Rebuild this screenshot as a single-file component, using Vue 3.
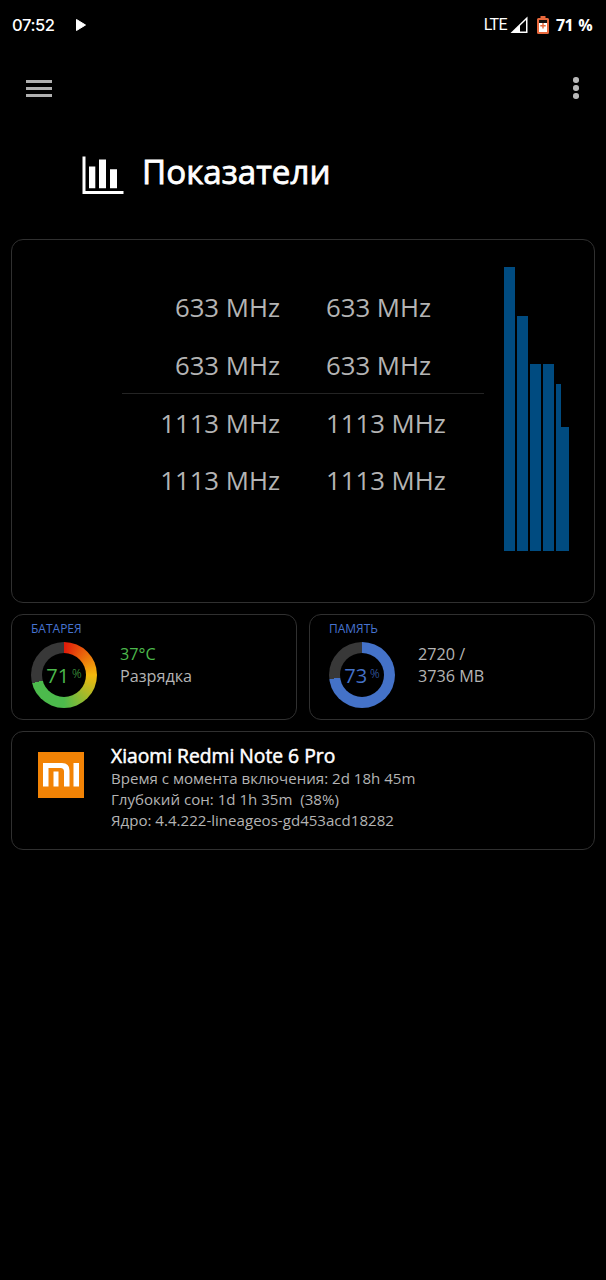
<template>
  <div class="screen">
    <div class="statusBar">
      <span class="clock">07:52</span>
      <svg class="play" width="10" height="12" viewBox="0 0 10 12"><path d="M0.5 0.5L9.5 6L0.5 11.5Z" fill="#fff" stroke="#fff" stroke-linejoin="round" /></svg>
      <span class="network">LTE</span>
      <svg class="signal" width="18" height="18" viewBox="0 0 18 18">
        <path d="M0.5 17L17.5 0.5V17Z" fill="#fff" />
        <path d="M10 9.8L16 4V15.4H10Z" fill="#000" />
      </svg>
      <svg class="batteryIcon" width="12" height="18" viewBox="0 0 12 18">
        <path d="M3.5 0H8.5V2H10.5Q12 2 12 3.5V16.5Q12 18 10.5 18H1.5Q0 18 0 16.5V3.5Q0 2 1.5 2H3.5Z" fill="#e8683c" />
        <path d="M2 4H10V7H2Z" fill="#141010" />
        <path d="M2 7H10V16H2Z" fill="#fff" />
        <path d="M5.3 7V9H3.3V10.4H5.3V12.4H6.7V10.4H8.7V9H6.7V7Z" fill="#e8683c" />
      </svg>
      <span class="charge">71 %</span>
    </div>

    <div class="toolbar">
      <button class="menuButton"><i></i><i></i><i></i></button>
      <button class="moreButton"><i></i><i></i><i></i></button>
    </div>

    <div class="pageTitle">
      <svg width="42" height="38" viewBox="0 0 42 38" fill="#fff">
        <path d="M0.5 0.5H3.5V35H41.5V38H0.5Z" />
        <path d="M7 10.5H13.3V32.2H7ZM17 3.5H24V32.2H17ZM28 13.2H35V32.2H28Z" />
      </svg>
      <h1>Показатели</h1>
    </div>

    <div class="cards">
      <div class="card cpuCard">
        <div class="frequencies">
          <div v-for="(row, index) in frequencies" :key="index" class="frequencyRow">
            <span class="left">{{ row[0] }} MHz</span>
            <span>{{ row[1] }} MHz</span>
          </div>
        </div>
        <div class="bars">
          <div v-for="(bar, index) in bars" :key="index" class="bar"
            :style="{ width: bar.width + 'px', height: bar.height + 'px', marginRight: bar.gap + 'px' }"></div>
        </div>
      </div>

      <div class="gauges">
        <div class="card gaugeCard battery">
          <p class="gaugeLabel">БАТАРЕЯ</p>
          <div class="gaugeContent">
            <div class="ring"><div class="ringValue">71<small>%</small></div></div>
            <div class="gaugeInfo">
              <p class="temperature">37°C</p>
              <p>Разрядка</p>
            </div>
          </div>
        </div>
        <div class="card gaugeCard memory">
          <p class="gaugeLabel">ПАМЯТЬ</p>
          <div class="gaugeContent">
            <div class="ring"><div class="ringValue">73<small>%</small></div></div>
            <div class="gaugeInfo">
              <p>2720 /</p>
              <p>3736 MB</p>
            </div>
          </div>
        </div>
      </div>

      <div class="card deviceCard">
        <svg class="logo" width="46" height="46" viewBox="0 0 46 46">
          <rect width="46" height="46" fill="#f28305" />
          <path d="M5 11H24Q31.5 11 31.5 18.5V34.5H26V19.5Q26 16 22.5 16H10.5V34.5H5ZM15.5 19.5H20.5V34.5H15.5ZM35.5 11H41V34.5H35.5Z" fill="#fff" />
        </svg>
        <div class="deviceInfo">
          <h2>Xiaomi Redmi Note 6 Pro</h2>
          <p class="uptime">Время с момента включения: 2d 18h 45m</p>
          <p class="sleep">Глубокий сон: 1d 1h 35m&nbsp; (38%)</p>
          <p class="kernel">Ядро: 4.4.222-lineageos-gd453acd18282</p>
        </div>
      </div>
    </div>
  </div>
</template>

<script setup>
import { ref } from "vue"

const frequencies = ref([
  [633, 633],
  [633, 633],
  [1113, 1113],
  [1113, 1113],
])

const bars = ref([
  { width: 11, height: 284, gap: 2 },
  { width: 11, height: 235, gap: 2 },
  { width: 11, height: 187, gap: 2 },
  { width: 11, height: 187, gap: 2 },
  { width: 5, height: 167, gap: 0 },
  { width: 8, height: 124, gap: 0 },
])
</script>

<style>
body{
  margin: 0;
  background-color: #000;
}
</style>

<style scoped>
.screen{
  box-sizing: border-box;
  width: 606px;
  height: 1280px;
  overflow: hidden;
  background-color: #000;
  color: #b4b4b4;
  font-family: "Open Sans", "Noto Sans", sans-serif;
}

h1, h2, p{
  margin: 0;
  font-weight: 400;
}

.statusBar{
  display: flex;
  align-items: center;
  box-sizing: border-box;
  height: 50px;
  padding: 0 14px 0 12px;
  color: #fff;
}

.clock{
  width: 64px;
  font: 500 16.5px/50px Inter, sans-serif;
  letter-spacing: -0.4px;
}

.network{
  margin-left: auto;
  font: 400 16px/50px Roboto, sans-serif;
  letter-spacing: -0.6px;
}

.signal{
  margin: 0 9px 0 3px;
}

.charge{
  margin-left: 7px;
  font-size: 16px;
  font-weight: 700;
  letter-spacing: -0.6px;
  word-spacing: 1.5px;
}

.toolbar{
  display: flex;
  justify-content: space-between;
  align-items: center;
  height: 76px;
  padding: 0 27.5px 0 26px;
}

.toolbar button{
  display: flex;
  flex-direction: column;
  padding: 0;
  border: 0;
  background: transparent;
}

.menuButton{
  gap: 4px;
}

.menuButton i{
  width: 26px;
  height: 3px;
  background-color: #b0b0b0;
}

.moreButton{
  gap: 2.5px;
}

.moreButton i{
  width: 5.5px;
  height: 5.5px;
  border-radius: 50%;
  background-color: #b8b8b8;
}

.pageTitle{
  display: flex;
  align-items: center;
  gap: 18px;
  height: 98px;
  padding-left: 82px;
  color: #fff;
}

.pageTitle h1{
  padding-bottom: 6px;
  font-size: 33.2px;
  line-height: 46px;
  -webkit-text-stroke: 0.8px #fff;
}

.cards{
  display: flex;
  flex-direction: column;
  gap: 11px;
  padding: 15px 11px 0;
}

.card{
  box-sizing: border-box;
  border: 1px solid #303030;
  border-radius: 12px;
}

.cpuCard{
  display: flex;
  justify-content: space-between;
  height: 364px;
  padding: 27px 25px 0 110px;
}

.frequencies{
  width: 362px;
  padding-top: 11px;
}

.frequencyRow{
  display: grid;
  grid-template-columns: 158px 1fr;
  column-gap: 46px;
  box-sizing: border-box;
  height: 57.5px;
  font-size: 25.75px;
  line-height: 59px;
}

.frequencyRow:nth-child(2){
  line-height: 58px;
}

.frequencyRow:nth-child(3){
  border-top: 1px solid #242424;
}

.left{
  text-align: right;
}

.bars{
  display: flex;
  align-items: flex-end;
  height: 284px;
}

.bar{
  background-color: #004b80;
}

.gauges{
  display: grid;
  grid-template-columns: 286px 286px;
  justify-content: space-between;
}

.gaugeCard{
  height: 106px;
  padding: 5px 0 0 19px;
}

.gaugeLabel{
  color: #4774d0;
  font-size: 12px;
  line-height: 17px;
}

.gaugeContent{
  display: flex;
  gap: 23px;
  padding-top: 5px;
}

.ring{
  display: flex;
  width: 66px;
  height: 66px;
  border-radius: 50%;
}

.battery .ring{
  background: conic-gradient(#e0180a 0%, #f5b80c 25%, #4cba4c 50%, #4cba4c 71%, #383838 71%);
}

.memory .ring{
  background: conic-gradient(#4472c8 0 73%, #383838 73%);
}

.ringValue{
  display: flex;
  justify-content: center;
  width: 44px;
  height: 44px;
  margin: 11px;
  border-radius: 50%;
  background-color: #000;
  font-size: 20px;
  line-height: 45px;
}

.ringValue small{
  margin-left: 3px;
  font-size: 12px;
  font-weight: 300;
  line-height: 41px;
}

.battery .ringValue, .temperature{
  color: #4cb84c;
}

.memory .ringValue{
  color: #4472c8;
}

.gaugeInfo{
  padding-top: 1px;
  font-size: 16.2px;
  line-height: 22px;
}

.deviceCard{
  display: flex;
  gap: 27px;
  height: 119px;
  padding: 20px 0 0 26px;
}

.deviceInfo{
  margin-top: -9px;
  font-size: 15.08px;
  line-height: 21px;
  white-space: nowrap;
}

.deviceInfo h2{
  color: #fff;
  font-size: 19.3px;
  line-height: 25px;
  -webkit-text-stroke: 0.5px #fff;
}
</style>
